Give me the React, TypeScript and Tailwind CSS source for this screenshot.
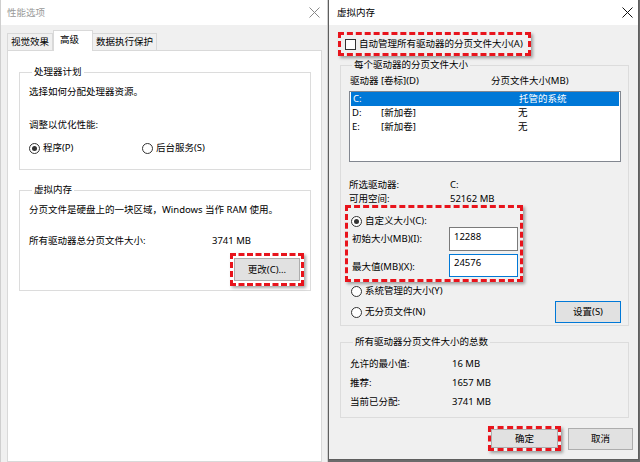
import React from "react";

const CloseIcon = ({ color }: { color: string }) => (
  <svg width="11" height="11" viewBox="0 0 11 11">
    <path d="M0.5 0.5 L10.5 10.5 M10.5 0.5 L0.5 10.5" stroke={color} strokeWidth="1" />
  </svg>
);

const Radio = ({ checked }: { checked?: boolean }) => (
  <span className="w-[11px] h-[11px] rounded-full border border-[#333] bg-white flex items-center justify-center shrink-0">
    {checked && <span className="w-[5px] h-[5px] rounded-full bg-[#333]" />}
  </span>
);

const RadioItem = ({ checked, label, className = "" }: { checked?: boolean; label: string; className?: string }) => (
  <div className={`flex items-center gap-[3px] h-[14px] ${className}`}>
    <Radio checked={checked} />
    <span>{label}</span>
  </div>
);

const redBox =
  "border-[3px] border-dashed border-[#e8141c] shadow-[2px_2px_3px_rgba(0,0,0,0.35)]";

const WinButton = ({ label, className = "" }: { label: string; className?: string }) => (
  <div className={`bg-[#e1e1e1] border border-[#adadad] flex items-center justify-center ${className}`}>
    {label}
  </div>
);

const PerformanceOptions = () => (
  <div className="w-[328px] h-full flex flex-col bg-[#f0f0f0] border-l border-r border-[#cfcfcf]">
    <div className="h-[25px] bg-white flex items-center justify-between pl-[6px] pr-[7px] text-[#999]">
      <span>性能选项</span>
      <CloseIcon color="#888" />
    </div>
    <div className="flex-1 flex flex-col pl-[6px] pt-[5px]">
      {/* tabs */}
      <div className="flex items-end h-[20px]">
        <div className="w-[46px] h-[17px] border border-b-0 border-[#d9d9d9] flex items-center justify-center">视觉效果</div>
        <div className="w-[40px] h-[21px] -mb-px relative z-10 bg-white border border-b-0 border-[#d9d9d9] flex items-start pt-[2px] pl-[6px]">高级</div>
        <div className="w-[64px] h-[17px] border border-b-0 border-l-0 border-[#d9d9d9] flex items-center justify-center">数据执行保护</div>
      </div>
      <div className="w-[315px] flex-1 bg-white border border-[#d9d9d9] flex flex-col">
        <fieldset className="ml-[11px] mt-[14px] w-[292px] border border-[#dcdcdc] pl-[9px] pb-[14px]">
          <legend className="ml-[3px] px-[2px] h-[14px]">处理器计划</legend>
          <div className="mt-[6px] h-[14px]">选择如何分配处理器资源。</div>
          <div className="mt-[19px] h-[14px]">调整以优化性能:</div>
          <div className="mt-[9px] flex">
            <RadioItem checked label="程序(P)" className="w-[113px]" />
            <RadioItem label="后台服务(S)" />
          </div>
        </fieldset>
        <fieldset className="ml-[11px] mt-[13px] w-[292px] border border-[#dcdcdc] pl-[9px] pb-[4px] flex flex-col">
          <legend className="ml-[3px] px-[2px] h-[14px]">虚拟内存</legend>
          <div className="mt-[6px] h-[14px]">分页文件是硬盘上的一块区域，Windows 当作 RAM 使用。</div>
          <div className="mt-[17px] h-[14px] flex">
            <span className="w-[183px]">所有驱动器总分页文件大小:</span>
            <span>3741 MB</span>
          </div>
          <div className={`self-end mr-[6px] mt-[5px] w-[74px] h-[33px] flex items-center justify-center ${redBox}`}>
            <WinButton label="更改(C)..." className="w-[66px] h-[23px]" />
          </div>
        </fieldset>
      </div>
    </div>
  </div>
);

const VirtualMemory = () => (
  <div className="w-[311px] h-[460px] flex flex-col bg-[#f0f0f0] border-l border-r border-b border-[#5e5e5e]">
    <div className="h-[25px] bg-white flex items-center justify-between pl-[8px] pr-[5px] text-black">
      <span>虚拟内存</span>
      <CloseIcon color="#111" />
    </div>
    <div className="flex-1 flex flex-col pl-[9px]">
      <div className={`mt-[7px] w-[193px] h-[24px] flex items-center pl-[4px] gap-[3px] ${redBox}`}>
        <span className="w-[11px] h-[11px] border border-[#333] bg-white shrink-0" />
        <span>自动管理所有驱动器的分页文件大小(A)</span>
      </div>

      <fieldset className="ml-[2px] mt-[2px] w-[289px] border border-[#dcdcdc] pl-[8px] pr-[7px] pb-[2px] flex flex-col">
        <legend className="ml-[3px] px-[2px] h-[14px]">每个驱动器的分页文件大小</legend>
        <div className="mt-[2px] h-[14px] flex pl-[1px]">
          <span className="w-[141px]">驱动器 [卷标](D)</span>
          <span>分页文件大小(MB)</span>
        </div>
        <div className="mt-[3px] w-[272px] h-[71px] bg-white border border-[#828790] flex flex-col">
          {[
            { d: "C:", v: "", s: "托管的系统", sel: true },
            { d: "D:", v: "[新加卷]", s: "无" },
            { d: "E:", v: "[新加卷]", s: "无" },
          ].map((r) => (
            <div
              key={r.d}
              className={`h-[14px] flex items-center pl-[2px] ${r.sel ? "bg-[#0078d7] text-white mx-[1px] pl-[1px]" : ""}`}
            >
              <span className="w-[29px]">{r.d}</span>
              <span className="w-[137px]">{r.v}</span>
              <span>{r.s}</span>
            </div>
          ))}
        </div>
        <div className="mt-[16px] h-[14px] flex">
          <span className="w-[101px]">所选驱动器:</span>
          <span>C:</span>
        </div>
        <div className="h-[14px] flex">
          <span className="w-[101px]">可用空间:</span>
          <span>52162 MB</span>
        </div>
        <div className={`-ml-[4px] -mt-[1px] w-[178px] h-[77px] flex flex-col ${redBox}`}>
          <RadioItem checked label="自定义大小(C):" className="mt-[6px] ml-[3px]" />
          <div className="-mt-[1px] h-[24px] flex items-center">
            <span className="w-[101px] pl-[4px]">初始大小(MB)(I):</span>
            <div className="w-[69px] h-[24px] bg-white border border-[#7a7a7a] pl-[4px] pt-[2px]">12288</div>
          </div>
          <div className="mt-[3px] h-[23px] flex items-center">
            <span className="w-[101px] pl-[4px] pt-[3px]">最大值(MB)(X):</span>
            <div className="w-[69px] h-[23px] bg-white border border-[#0078d7] pl-[4px] pt-[1px]">24576</div>
          </div>
        </div>
        <RadioItem label="系统管理的大小(Y)" className="mt-[2px] ml-[2px]" />
        <div className="mt-[3px] h-[22px] flex items-center justify-between">
          <RadioItem label="无分页文件(N)" className="ml-[2px]" />
          <div className="w-[66px] h-[22px] bg-[#e1e1e1] border border-[#0078d7] flex items-center justify-center">设置(S)</div>
        </div>
      </fieldset>

      <fieldset className="ml-[2px] mt-[9px] w-[289px] border border-[#dcdcdc] pl-[9px] pb-[6px] flex flex-col">
        <legend className="ml-[3px] px-[2px] h-[14px]">所有驱动器分页文件大小的总数</legend>
        {[
          ["允许的最小值:", "16 MB"],
          ["推荐:", "1657 MB"],
          ["当前已分配:", "3741 MB"],
        ].map(([k, v], i) => (
          <div key={k} className={`h-[19px] flex items-center ${i === 0 ? "mt-[5px]" : ""}`}>
            <span className="w-[102px]">{k}</span>
            <span>{v}</span>
          </div>
        ))}
      </fieldset>

      <div className="mt-[8px] flex items-start justify-end pr-[5px] gap-[7px]">
        <div className={`w-[73px] h-[25px] flex ${redBox}`}>
          <WinButton label="确定" className="flex-1" />
        </div>
        <WinButton label="取消" className="mt-[2px] w-[65px] h-[22px]" />
      </div>
    </div>
  </div>
);

export default function App() {
  return (
    <div className="w-[640px] h-[462px] overflow-hidden flex bg-[#6b6b6b] text-[9.5px] leading-[14px] text-black font-['Noto_Sans','Noto_Sans_CJK_SC',sans-serif]">
      <PerformanceOptions />
      <VirtualMemory />
    </div>
  );
}
